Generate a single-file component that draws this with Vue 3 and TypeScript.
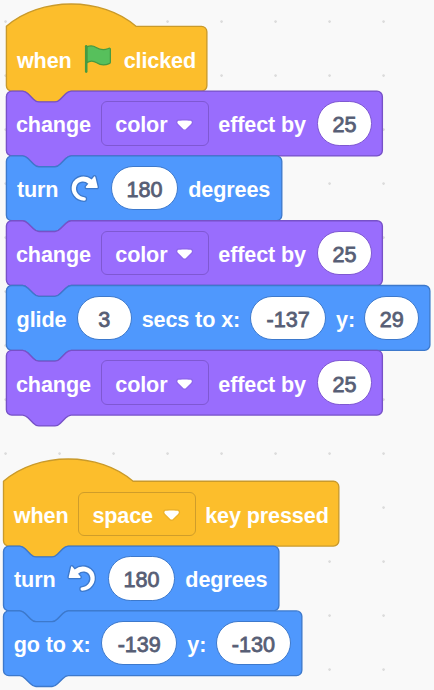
<script setup lang="ts">
type Kind = 'label' | 'menu' | 'oval' | 'flag' | 'cw' | 'ccw'
interface Part { kind: Kind; text?: string; w: number; gap: number }
interface Block { color: 'event' | 'looks' | 'motion'; width: number; hat?: boolean; parts: Part[] }
interface Stack { id: string; x: number; y: number; blocks: Block[] }

const SCALE = 1.35
const ROW = 48

const p = (kind: Kind, w: number, gap = 10.8, text = ''): Part => ({ kind, w, gap, text })

const changeColor = (): Block => ({
  color: 'looks', width: 278.5,
  parts: [
    p('label', 74.1, 9.6, 'change'), p('menu', 107.8, 11, 'color'),
    p('label', 89, 9.4, 'effect by'), p('oval', 55, 9.8, '25'),
  ],
})

const stacks: Stack[] = [
  {
    id: 'first', x: 6.4, y: 26.3,
    blocks: [
      {
        color: 'event', width: 148.5, hat: true,
        parts: [p('label', 52.4, 10.5, 'when'), p('flag', 32.4, 11), p('label', 73, 11, 'clicked')],
      },
      changeColor(),
      {
        color: 'motion', width: 204,
        parts: [
          p('label', 40.6, 10.5, 'turn'), p('cw', 32.4, 11),
          p('oval', 66.4, 10.4, '180'), p('label', 83, 10.6, 'degrees'),
        ],
      },
      changeColor(),
      {
        color: 'motion', width: 313.7,
        parts: [
          p('label', 49.6, 10.2, 'glide'), p('oval', 55, 10.5, '3'),
          p('label', 98, 10, 'secs to x:'), p('oval', 75.8, 10.6, '-137'),
          p('label', 18, 10, 'y:'), p('oval', 55, 10.3, '29'),
        ],
      },
      changeColor(),
    ],
  },
  {
    id: 'second', x: 3.5, y: 481.3,
    blocks: [
      {
        color: 'event', width: 248.4, hat: true,
        parts: [
          p('label', 53.4, 10.3, 'when'), p('menu', 118.2, 11, 'space'),
          p('label', 124, 8.8, 'key pressed'),
        ],
      },
      {
        color: 'motion', width: 204,
        parts: [
          p('label', 40.6, 10.5, 'turn'), p('ccw', 32.4, 11),
          p('oval', 66.4, 10.4, '180'), p('label', 83, 10.6, 'degrees'),
        ],
      },
      {
        color: 'motion', width: 221,
        parts: [
          p('label', 77, 10.2, 'go to x:'), p('oval', 75.8, 10.7, '-139'),
          p('label', 18, 10.1, 'y:'), p('oval', 75.8, 10.3, '-130'),
        ],
      },
    ],
  },
]

function outline(b: Block): string {
  const top = b.hat
    ? 'M0 0C25 -22 71 -22 96 0'
    : 'M0 4A4 4 0 0 1 4 0H12c2 0 3 1 4 2l4 4c1 1 2 2 4 2h12c2 0 3 -1 4 -2l4 -4c1 -1 2 -2 4 -2'
  return `${top}H${b.width - 4}a4 4 0 0 1 4 4v40a4 4 0 0 1 -4 4H48c-2 0 -3 1 -4 2l-4 4c-1 1 -2 2 -4 2h-12c-2 0 -3 -1 -4 -2l-4 -4c-1 -1 -2 -2 -4 -2H4a4 4 0 0 1 -4 -4z`
}
</script>

<template>
  <main class="workspace">
    <svg class="canvas" width="434" height="690">
      <defs>
        <pattern id="grid" x="4" y="20" width="54" height="54" patternUnits="userSpaceOnUse">
          <path d="M0.2 1.5H2.9M1.55 0.2V2.9" stroke="#dcdcdc" stroke-width="1.35" />
        </pattern>
      </defs>
      <rect width="434" height="690" fill="url(#grid)" />
      <g v-for="s in stacks" :key="s.id" :transform="`translate(${s.x} ${s.y}) scale(${SCALE})`">
        <path
          v-for="(b, i) in s.blocks" :key="i" :class="['shape', b.color]"
          :transform="`translate(0 ${i * ROW})`" :d="outline(b)"
        />
      </g>
    </svg>

    <section v-for="s in stacks" :key="s.id" :class="['stack', s.id]">
      <div v-for="(b, i) in s.blocks" :key="i" :class="['block', b.color]">
        <div
          v-for="(part, j) in b.parts" :key="j" :class="['part', part.kind]"
          :style="{ width: part.w + 'px', marginLeft: part.gap + 'px' }"
        >
          <svg v-if="part.kind === 'flag'" class="icon" viewBox="0 0 24 24">
            <path
              d="M5 2.9C7.4 1.9 10 2.1 12 3.3C15 5.2 18 5.5 21 4.1C21.9 3.6 22.5 3.8 22.5 4.6V14.2C22.5 14.8 22.2 15.1 21.6 15.3C18 16.9 15.1 16.5 12.4 14.7C9.8 13.1 7.2 13.2 5 14.7Z"
              fill="#57c05c" stroke="#459a42" stroke-width="0.9" stroke-linejoin="round"
            />
            <path d="M4.6 2.5V21.2" fill="none" stroke="#459a42" stroke-width="1.9" stroke-linecap="round" />
          </svg>
          <svg v-else-if="part.kind === 'cw' || part.kind === 'ccw'" class="icon" viewBox="0 0 24 24">
            <path fill="#3d79cc" d="M22.68 12.2a1.6 1.6 0 0 1-1.27.63H13.72a1.59 1.59 0 0 1-1.16-2.58l1.12-1.41a4.82 4.82 0 0 0-3.14-.77 4.31 4.31 0 0 0-2 .8 4.25 4.25 0 0 0-1.34 1.73 5.06 5.06 0 0 0 .54 4.62A5.58 5.58 0 0 0 12 17.74h0a2.26 2.26 0 0 1-.16 4.52A10.25 10.25 0 0 1 3.74 18 10.14 10.14 0 0 1 2.25 8.78 9.7 9.7 0 0 1 5.08 4.64 9.92 9.92 0 0 1 9.66 2.5a10.66 10.66 0 0 1 7.72 1.68l1.08-1.35a1.57 1.57 0 0 1 1.24-.6 1.6 1.6 0 0 1 1.54 1.21l1.7 7.37A1.57 1.57 0 0 1 22.68 12.2Z" />
            <path fill="#fff" d="M21.38 11.83H13.77a.59.59 0 0 1-.43-1l1.75-2.19a5.9 5.9 0 0 0-4.7-1.58 5.07 5.07 0 0 0-4.11 3.17A6 6 0 0 0 7 15.77a6.51 6.51 0 0 0 5 2.92 1.31 1.31 0 0 1-.08 2.62 9.3 9.3 0 0 1-7.35-3.82A9.16 9.16 0 0 1 3.17 9.12 8.51 8.51 0 0 1 5.71 5.4 8.76 8.76 0 0 1 9.82 3.48a9.71 9.71 0 0 1 7.75 2.07l1.67-2.1a.59.59 0 0 1 1 .21L22 11.08A.59.59 0 0 1 21.38 11.83Z" />
          </svg>
          <template v-else>
            <span class="text">{{ part.text }}</span>
            <svg v-if="part.kind === 'menu'" class="arrow" viewBox="0 0 12.71 8.79">
              <path opacity="0.06" d="M12.71 2.44A2.41 2.41 0 0 1 12 4.16L8.08 8.08a2.45 2.45 0 0 1-3.45 0L.72 4.16A2.42 2.42 0 0 1 0 2.44 2.48 2.48 0 0 1 .71.71C1 .47 1.43 0 6.36 0s5.39.46 5.64.71a2.44 2.44 0 0 1 .71 1.73z" />
              <path fill="#fff" d="M6.36 7.79a1.43 1.43 0 0 1-1-.42L1.42 3.45a1.44 1.44 0 0 1 0-2c.56-.56 9.31-.56 9.87 0a1.44 1.44 0 0 1 0 2L7.37 7.37a1.43 1.43 0 0 1-1.01.42z" />
            </svg>
          </template>
        </div>
      </div>
    </section>
  </main>
</template>

<style>
body {
  background: #f9f9f9;
}
</style>

<style scoped>
.workspace {
  position: relative;
  width: 434px;
  height: 690px;
  overflow: hidden;
  background: #f9f9f9;
  font-family: "Liberation Sans", Arial, sans-serif;
  font-size: 21.6px;
  font-weight: 700;
  letter-spacing: -0.12px;
  color: #fff;
}
.canvas {
  position: absolute;
  inset: 0;
  display: block;
}
.shape {
  stroke-width: 1;
}
.shape.event { fill: #fcbe2c; stroke: #c99a2b; }
.shape.looks { fill: #996dfd; stroke: #7751c8; }
.shape.motion { fill: #4f98fd; stroke: #3d79cc; }
.block.event { --edge: #cf9d2a; }
.block.looks { --edge: #7f58d2; }
.block.motion { --edge: #3d79cc; }
.stack {
  position: absolute;
}
.first { left: 6.4px; top: 26.3px; }
.second { left: 3.5px; top: 481.3px; }
.block {
  display: flex;
  align-items: center;
  height: 64.8px;
}
.part {
  flex: none;
  box-sizing: border-box;
  display: flex;
  align-items: center;
  white-space: nowrap;
}
.text {
  line-height: 26px;
  padding-top: 4px;
}
.menu {
  height: 44.4px;
  border: 1px solid var(--edge);
  border-radius: 6px;
  padding: 0 14.8px 0 13.2px;
  justify-content: space-between;
}
.oval {
  height: 44.4px;
  border: 1px solid var(--edge);
  border-radius: 22.2px;
  background: #fff;
  color: #575e75;
  justify-content: center;
  font-weight: 400;
  letter-spacing: 0;
  -webkit-text-stroke: 0.8px #575e75;
}
.icon {
  display: block;
  width: 32.4px;
  height: 32.4px;
}
.ccw .icon {
  transform: scaleX(-1);
}
.arrow {
  display: block;
  width: 17.2px;
  height: 11.9px;
  margin-top: 2px;
}
</style>
